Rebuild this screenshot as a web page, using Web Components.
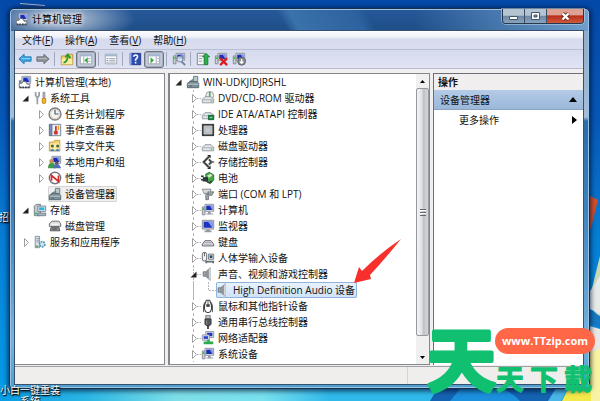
<!DOCTYPE html>
<html lang="zh-CN">
<head>
<meta charset="utf-8">
<title>计算机管理</title>
<style>
  body {
    margin: 0;
    font: 10px/16px "Open Sans", "Noto Sans CJK SC", sans-serif;
    color: #111;
    overflow: hidden;
  }
</style>
</head>
<body>

<template id="desktop-surface-template">
  <style>
    :host {
      display: grid;
      position: relative;
      box-sizing: border-box;
      height: 100vh;
      padding: 8px 10px 12px 9px;
      overflow: hidden;
    }
    .wallpaper {
      position: absolute;
      inset: 0;
      width: 100%;
      height: 100%;
    }
    ::slotted(*) { position: relative; }
  </style>
  <svg class="wallpaper" viewBox="0 0 600 401" preserveAspectRatio="none" aria-hidden="true">
    <defs>
      <linearGradient id="sky" x2="0" y2="1">
        <stop offset="0" stop-color="#0449a8"/><stop offset=".3" stop-color="#0558b8"/>
        <stop offset=".6" stop-color="#067fd6"/><stop offset="1" stop-color="#079de8"/>
      </linearGradient>
      <linearGradient id="floor">
        <stop offset="0" stop-color="#0a9ce4"/><stop offset=".2" stop-color="#2bb6e4"/>
        <stop offset=".4" stop-color="#7ddfe8"/><stop offset=".6" stop-color="#78e0ee"/>
        <stop offset=".75" stop-color="#2fb9ea"/>
      </linearGradient>
    </defs>
    <path fill="url(#sky)" d="M0 0h600v401H0z"/>
    <path fill="url(#floor)" d="M0 384h440v17H0z"/>
    <path fill="#12418c" d="M20 3l25 2v8H21z"/>
    <path fill="none" stroke="#9fb8da" d="M20 3.500l25 2"/>
    <path fill="#d4502c" d="M582 192l16 8-7 28-9 10z"/>
    <path fill="#c9d9b8" d="M600 256l-12 48 12 14z"/>
    <path fill="#e7ebe8" d="M588 294l12-18v38l-12-6z"/>
    <path fill="#167ac4" d="M586 308l14 8v12l-14-7z"/>
    <path fill="#e9e8e4" d="M586 325l14 4v22l-14 8z"/>
    <path fill="#f3e94a" d="M562 401l22-44 16-8v52z"/>
    <path fill="#f8f3a2" d="M590 352l10-3v52h-9z"/>
    <path fill="#1463b2" d="M430 401l10-17h127l-12 17z"/>
    <path fill="#1b90dc" d="M460 389q40-10 60 12h-70z"/>
    <path fill="#49b5e8" d="M556 388h12l-7 13h-13z"/>
  </svg>
  <slot></slot>
</template>

<template id="desktop-label-template">
  <style>
    :host {
      position: absolute !important;
      text-align: center;
      line-height: 11px;
      color: #fff;
      text-shadow: 0 1px 2px #000, 1px 1px 1px #000;
    }
    :host([place="side"]) { left: -1px; top: 212px; }
    :host([place="corner"]) { left: 0; top: 385px; width: 60px; }
  </style>
  <slot></slot>
</template>

<template id="app-window-template">
  <style>
    :host {
      display: flex;
      flex-direction: column;
      min-height: 0;
      padding: 0 5px 3px 4px;
      border: 1px solid #16304f;
      border-radius: 5px 5px 4px 4px;
      background:
        radial-gradient(ellipse 75px 24px at 50px 10px, #a9bad0 20%, transparent 100%),
        linear-gradient(90deg, transparent 70%, #6f9fcc) top / 100% 22px no-repeat,
        linear-gradient(60deg, transparent 47%, #3a72ab 49%, #2c629f 60%, transparent 62%) top / 100% 22px no-repeat,
        linear-gradient(#27589a, #1d4f88) top / 100% 22px no-repeat,
        linear-gradient(#8eaccb 20px, #a6bed6 108px, #2b6cab 112px, #3e82bd 200px, #75b4e0 330px, #4c9fd0);
      box-shadow: inset 0 0 0 1px #9fc2e0, 0 1px 5px 1px rgba(0, 10, 40, .7);
    }
    header {
      display: flex;
      align-items: center;
      gap: 3px;
      box-sizing: border-box;
      height: 21px;
      padding: 0 0 2px 1px;
    }
    h1 {
      flex: 1;
      margin: 0;
      font-size: 10px;
      font-weight: 400;
      color: #000;
      text-shadow: 0 0 5px #fff, 0 0 5px #dde6f0;
    }
    .controls {
      display: flex;
      align-self: start;
      height: 14px;
      border: 1px solid #26384e;
      border-top: 0;
      border-radius: 0 0 4px 4px;
      overflow: hidden;
      box-shadow: 0 0 0 1px rgba(200, 220, 240, .5);
    }
    .controls button {
      display: grid;
      place-items: center;
      width: 22px;
      padding: 0;
      border: 0;
      border-right: 1px solid #3a4e66;
      background: linear-gradient(#b5c4d3 0 45%, #6d87a3 50%, #8ba4bd);
    }
    .controls .close {
      width: 36px;
      border: 0;
      background: linear-gradient(#dea294 0 40%, #b92f1c 50%, #cf5a3c);
    }
    .controls svg { width: 13px; height: 11px; }
    .client {
      display: flex;
      flex: 1;
      flex-direction: column;
      min-height: 0;
      border: 1px solid #36506e;
      background: #f0eeee;
    }
  </style>
  <header>
    <mmc-icon name="manage"></mmc-icon>
    <h1></h1>
    <div class="controls">
      <button aria-label="最小化"><svg viewBox="0 0 13 11"><path fill="#fff" stroke="#43566c" d="M2.500 5.500h8v3h-8z"/></svg></button>
      <button aria-label="最大化"><svg viewBox="0 0 13 11"><path fill="#fff" stroke="#43566c" fill-rule="evenodd" d="M2.500 1.500h8v7h-8zM5 4h3v2H5z"/></svg></button>
      <button class="close" aria-label="关闭"><svg viewBox="0 0 13 11"><path stroke="#6b2a22" stroke-width="4" d="M3.500 2.500l6 6M9.500 2.500l-6 6"/><path stroke="#fff" stroke-width="2.400" d="M3.500 2.500l6 6M9.500 2.500l-6 6"/></svg></button>
    </div>
  </header>
  <div class="client"><slot></slot></div>
</template>

<template id="menu-bar-template">
  <style>
    :host {
      display: flex;
      height: 18px;
      flex: none;
      padding-left: 1px;
      border-bottom: 1px solid #b9bfd2;
      background: linear-gradient(#fdfdff, #eef0f9 35%, #d6dbed 45%, #d9ddef);
    }
    ::slotted(button) {
      padding: 0 6px;
      border: 0;
      background: none;
      color: inherit;
      font: inherit;
    }
  </style>
  <slot></slot>
</template>

<template id="tool-bar-template">
  <style>
    :host {
      display: flex;
      flex: none;
      align-items: center;
      height: 18px;
      margin-bottom: 5px;
      padding-left: 1px;
      background: linear-gradient(#d5daed, #dfe3f4);
      box-shadow: 0 1px #b8bccb;
    }
    button {
      display: grid;
      place-items: center;
      box-sizing: border-box;
      width: 18px;
      height: 16px;
      padding: 0;
      border: 0;
      background: none;
    }
    button[aria-pressed] {
      width: 20px;
      height: 17px;
      border: 1px solid #6d7382;
      border-radius: 3px;
      background: #c5cad9;
      box-shadow: inset 0 0 0 1px #a6adbc;
    }
    hr {
      width: 1px;
      height: 14px;
      margin: 0 3px 0 2px;
      border: 0;
      background: #a4a9ba;
    }
  </style>
</template>

<template id="pane-group-template">
  <style>
    :host {
      display: grid;
      grid-template: minmax(0, 1fr) / 150fr 262fr 150fr;
      gap: 3px;
      flex: 1;
      min-height: 0;
    }
  </style>
  <slot></slot>
</template>

<template id="tree-pane-template">
  <style>
    :host {
      display: flex;
      min-width: 0;
      border: 1px solid #84868c;
      border-left: 0;
      background: #fff;
      overflow: hidden;
    }
    :host([scroll]) { border-left: 2px solid #84868c; }
    .rows { flex: 1; min-width: 0; padding-left: 3px; }
    :host([scroll]) .rows { padding-left: 1px; }
    .scrollbar { display: none; }
    :host([scroll]) .scrollbar {
      display: flex;
      flex-direction: column;
      width: 13px;
      background: #f0f0f0;
    }
    .scrollbar button {
      height: 14px;
      padding: 0;
      border: 0;
      background: none;
    }
    .scrollbar svg { display: block; width: 5px; height: 3px; margin: auto; }
    .thumb {
      display: grid;
      place-items: center;
      flex: 1;
      margin-bottom: 14px;
      border: 1px solid #9698a0;
      border-radius: 2px;
      background: linear-gradient(90deg, #f4f4f5, #e3e3e6 40%, #c2c3c9 60%, #d4d5da);
    }
    .thumb i {
      width: 6px;
      height: 7px;
      background: repeating-linear-gradient(#666 0 1px, #fff 1px 2px, transparent 2px 3px);
    }
  </style>
  <div class="rows" role="tree"><slot></slot></div>
  <div class="scrollbar">
    <button aria-label="向上滚动"><svg viewBox="0 0 7 4"><path d="M0 4l3.500-4L7 4z"/></svg></button>
    <div class="thumb"><i></i></div>
    <button aria-label="向下滚动"><svg viewBox="0 0 7 4"><path d="M0 0l3.500 4L7 0z"/></svg></button>
  </div>
</template>

<template id="tree-row-template">
  <style>
    :host {
      display: flex;
      height: 16px;
      white-space: nowrap;
    }
    .cell {
      position: relative;
      flex: none;
      width: 15px;
      height: 16px;
    }
    .cell svg { position: absolute; inset: 0; width: 15px; height: 16px; }
    .body {
      position: relative;
      display: flex;
      align-items: center;
      gap: 3px;
      padding-right: 2px;
      border-radius: 2px;
    }
    :host([selected="dim"]) .body { background: #efefef; box-shadow: inset 0 0 0 1px #d4d4d4; }
    :host([selected="on"]) .body {
      background: linear-gradient(#eaf3fd, #cde1f8);
      box-shadow: inset 0 0 0 1px #8fb3dc;
    }
    ::slotted(pointer-arrow) { left: calc(100% - 4px); bottom: 14px; }
  </style>
  <div class="body"><mmc-icon></mmc-icon><span><slot></slot></span><slot name="note"></slot></div>
</template>

<template id="pointer-arrow-template">
  <style>
    :host { position: absolute; width: 48px; height: 46px; }
    svg { display: block; }
  </style>
  <svg width="48" height="46" viewBox="0 0 48 46" aria-hidden="true">
    <path fill="#f8302c" d="M1 45l5-16 3 4q18-18 39-32-16 20-31 36l1 4z"/>
  </svg>
</template>

<template id="action-pane-template">
  <style>
    :host {
      min-width: 0;
      box-sizing: border-box;
      border-top: 1px solid #6d6f76;
      border-left: 1px solid #6d6f76;
      background: #fff;
    }
    h2, h3 { margin: 0; font-size: 10px; }
    h2 { padding-left: 4px; background: #f0eeee; }
    h3, button {
      display: flex;
      align-items: center;
      justify-content: space-between;
      box-sizing: border-box;
      width: 100%;
      padding: 0 6px;
      height: 20px;
      font: inherit;
      color: inherit;
    }
    h3 {
      border-bottom: 1px solid #8ba3c2;
      background: linear-gradient(#b4cbe6, #9bb7d9);
    }
    button { padding-left: 25px; border: 0; background: none; }
  </style>
  <h2>操作</h2>
  <h3>设备管理器<svg width="8" height="5" viewBox="0 0 8 5"><path d="M0 5l4-5 4 5z"/></svg></h3>
  <button>更多操作<svg width="5" height="8" viewBox="0 0 5 8"><path d="M0 0l5 4-5 4z"/></svg></button>
</template>

<template id="status-bar-template">
  <style>
    :host {
      display: grid;
      grid-template-columns: 393fr 175fr;
      flex: none;
      height: 17px;
      margin-top: 1px;
      border-top: 1px solid #9fa1a6;
      background: #f0eded;
    }
    i { border-right: 1px solid #d5d3d3; }
  </style>
  <i></i>
</template>

<template id="site-mark-template">
  <style>
    :host {
      position: absolute !important;
      right: 5px;
      bottom: 3px;
      width: 167px;
      height: 74px;
    }
    svg { position: absolute; inset: 0; overflow: visible; }
    text {
      font-family: "Noto Sans CJK TC", sans-serif;
      font-weight: 700;
      fill: #10c070;
      stroke: #10c070;
      stroke-linejoin: round;
    }
    a {
      position: absolute;
      right: 0;
      top: 4px;
      width: 100px;
      border-radius: 13px;
      background: #ff6747;
      color: #fff;
      font: 700 11px/26px "Open Sans", sans-serif;
      text-align: center;
      text-decoration: none;
    }
  </style>
  <svg width="167" height="74" viewBox="0 0 167 74">
    <text x="-1" y="62" font-size="69" stroke-width="4">天</text>
    <text y="66" font-size="28" stroke-width="1"><tspan x="68">天</tspan><tspan x="102">下</tspan><tspan x="136">載</tspan></text>
  </svg>
  <a href="#">www.TTzip.com</a>
</template>

<desktop-surface>
  <desktop-label place="side">招</desktop-label>
  <app-window label="计算机管理">
    <menu-bar>
      <button>文件(<u>F</u>)</button>
      <button>操作(<u>A</u>)</button>
      <button>查看(<u>V</u>)</button>
      <button>帮助(<u>H</u>)</button>
    </menu-bar>
    <tool-bar></tool-bar>
    <pane-group>
      <tree-pane>
        <tree-row level="0" icon="manage">计算机管理(本地)</tree-row>
        <tree-row level="1" icon="tools" state="open">系统工具</tree-row>
        <tree-row level="2" icon="clock" state="closed">任务计划程序</tree-row>
        <tree-row level="2" icon="event" state="closed">事件查看器</tree-row>
        <tree-row level="2" icon="share" state="closed">共享文件夹</tree-row>
        <tree-row level="2" icon="users" state="closed">本地用户和组</tree-row>
        <tree-row level="2" icon="perf" state="closed">性能</tree-row>
        <tree-row level="2" icon="device" selected="dim">设备管理器</tree-row>
        <tree-row level="1" icon="storage" state="open">存储</tree-row>
        <tree-row level="2" icon="disk">磁盘管理</tree-row>
        <tree-row level="1" icon="services" state="closed">服务和应用程序</tree-row>
      </tree-pane>
      <tree-pane scroll>
        <tree-row level="1" icon="device" state="open">WIN-UDKJIDJRSHL</tree-row>
        <tree-row level="2" icon="dvd" state="closed" lines>DVD/CD-ROM 驱动器</tree-row>
        <tree-row level="2" icon="ide" state="closed" lines>IDE ATA/ATAPI 控制器</tree-row>
        <tree-row level="2" icon="cpu" state="closed" lines>处理器</tree-row>
        <tree-row level="2" icon="drive" state="closed" lines>磁盘驱动器</tree-row>
        <tree-row level="2" icon="scsi" state="closed" lines>存储控制器</tree-row>
        <tree-row level="2" icon="battery" state="closed" lines>电池</tree-row>
        <tree-row level="2" icon="port" state="closed" lines>端口 (COM 和 LPT)</tree-row>
        <tree-row level="2" icon="computer" state="closed" lines>计算机</tree-row>
        <tree-row level="2" icon="monitor" state="closed" lines>监视器</tree-row>
        <tree-row level="2" icon="keyboard" state="closed" lines>键盘</tree-row>
        <tree-row level="2" icon="hid" state="closed" lines>人体学输入设备</tree-row>
        <tree-row level="2" icon="sound" state="open" lines>声音、视频和游戏控制器</tree-row>
        <tree-row level="3" icon="sound" selected="on" lines>High Definition Audio 设备<pointer-arrow slot="note"></pointer-arrow></tree-row>
        <tree-row level="2" icon="mouse" state="closed" lines>鼠标和其他指针设备</tree-row>
        <tree-row level="2" icon="usb" state="closed" lines>通用串行总线控制器</tree-row>
        <tree-row level="2" icon="network" state="closed" lines>网络适配器</tree-row>
        <tree-row level="2" icon="computer" state="closed" lines>系统设备</tree-row>
      </tree-pane>
      <action-pane></action-pane>
    </pane-group>
    <status-bar></status-bar>
  </app-window>
  <desktop-label place="corner">小白一键重装<br>系统</desktop-label>
  <site-mark></site-mark>
</desktop-surface>

<script>
  const screen16 = '<path fill="#d9dce4" stroke="#8a8f9c" d="M4.500 1.500h10v8h-10z"/><path fill="#1c2fb4" d="M6 3h7v5H6z"/><path fill="#7f9cf0" d="M10 3h3v5z"/>';
  const sheet = '<path fill="#fbfcfe" stroke="#9aa0ac" d="M1.500 2.500h13v11h-13z"/><path fill="#9db6d6" d="M2 3h12v2H2z"/>';
  const drive = '<path fill="#e3e5e8" stroke="#8d9299" d="M1.500 9.500l3-3h7l3 3v4h-13z"/><path stroke="#a4a8ae" d="M2 10h12"/><path fill="#38b24a" d="M11 11h2v1h-2z"/>';
  const tower = '<path fill="#cdd2d9" stroke="#7e858f" d="M1.500 4.500h3v9h-3z"/><path fill="#3eb84a" d="M2 6h2v2H2z"/>';

  const icons = {
    manage: screen16 + '<path fill="#fff" stroke="#5d6672" d="M1.500 9.500h3l1-2h3l2 3h3v4h-12z"/><path stroke="#39424e" stroke-dasharray="2 1" stroke-width="2" d="M2 14h12"/><path fill="#7d8794" d="M1 6h3v4H1z"/>',
    tools: '<path fill="none" stroke="#9aa0a8" stroke-width="2" d="M3 1v4q2 2 2 4v6M7 1v4L5 8"/><path fill="#c7cbd2" stroke="#7e858e" d="M11.500 1.500h2v6h-2z"/><path fill="#f5b52c" stroke="#b97e12" d="M10.500 8.500h4v5l-2 1-2-1z"/>',
    clock: '<circle cx="8" cy="8" r="6.800" fill="#f8f5ea" stroke="#7a7d82" stroke-width="1.600"/><circle cx="8" cy="8" r="5" fill="none" stroke="#d9cfae"/><path fill="none" stroke="#3a5f96" stroke-width="1.400" d="M8 3v5h4"/>',
    event: '<path fill="#7d90b8" stroke="#55637f" d="M1.500 1.500h3v13h-3z"/><path fill="#e9eef7" stroke="#6a7895" d="M4.500 1.500h10v13h-10z"/><path stroke="#d3372c" stroke-width="2" stroke-linecap="round" d="M9 4v5"/><circle cx="9" cy="11" r="2.400" fill="#d3372c"/><path stroke="#e9a11f" stroke-width="1.500" d="M12 3v5"/>',
    share: '<path fill="#f3d377" stroke="#c39a38" d="M1.500 3.500h5l1-2h6v12h-12z"/><path fill="#fbeaaa" d="M3 5h10v8H3z"/><circle cx="5" cy="8" r="1.800" fill="#4f6a36"/><circle cx="11" cy="8" r="1.800" fill="#4f6a36"/><path fill="#4b82b8" d="M2 14q3-6 6 0zM8 14q3-6 6 0z"/>',
    users: screen16 + '<circle cx="4" cy="7" r="2.500" fill="#c99053"/><path fill="#3f9a4b" d="M0 15q0-6 4-6t5 6z"/><circle cx="10" cy="9" r="2" fill="#70513a"/><path fill="#506fb4" d="M6 15q1-5 4-5t5 5z"/>',
    perf: '<circle cx="8" cy="8" r="6.500" fill="#fff" stroke="#73777d" stroke-width="1.600"/><path fill="none" stroke="#d42c25" stroke-width="2" d="M4 11V5l8 7V5"/>',
    device: '<path fill="#b7c8ca" stroke="#65777b" d="M8.500 1.500h5v6h-5z"/><path fill="none" stroke="#78868d" stroke-width="2" d="M4 8l5-3"/><path fill="#7e919a" stroke="#52636c" d="M1.500 9.500l3-2h8l2 2v5h-13z"/><path fill="#c3d0d6" d="M2 10h12v1H2z"/><path fill="#4a5a63" d="M4 12h3v1H4z"/>',
    storage: '<path fill="#c4c9d0" stroke="#717b86" d="M1.500 3.500l2-2h5v13h-7z"/><path fill="#dfe9f2" stroke="#6f7c8a" d="M5.500 3.500h9v6h-9z"/><path fill="#2cb4da" d="M7 5h6v3H7z"/><path fill="#aab6c2" stroke="#6f7c8a" d="M5.500 11.500h9v3h-9z"/><path fill="#41b658" d="M2 11h3v2H2z"/>',
    disk: '<path fill="#dcdedf" stroke="#5f6366" d="M1.500 5.500l3-3h8l2 3v3h-13z"/><path fill="#898e92" stroke="#505457" d="M3.500 9.500h9l1 4h-11z"/><path stroke="#fff" d="M4 6h8"/><path fill="#3f4346" d="M5 11h5v1H5z"/>',
    services: '<path fill="#dbe3ec" stroke="#7e8c9b" d="M2.500 1.500h5v13h-5z"/><path stroke="#8797a8" d="M4 4h3M4 6h3M4 8h3"/><circle cx="10.500" cy="10.500" r="3" fill="#d3e7f0" stroke="#5394b4" stroke-width="2" stroke-dasharray="2 1"/><path fill="#54a562" d="M3 12h3v2H3z"/>',
    dvd: '<circle cx="10" cy="5" r="4.500" fill="#eceeef" stroke="#8f9498"/><path stroke="#55a96a" stroke-width="2" d="M10 1v8"/>' + drive,
    ide: drive + '<path fill="#1c8c45" stroke="#0c6430" d="M8.500 9.500h6v5h-6z"/><path stroke="#a4e0b4" d="M10 12h3"/>',
    cpu: '<path fill="#3d3e40" d="M1 1h14v14H1z"/><path fill="#a9adb1" stroke="#dcdee0" d="M3.500 3.500h9v9h-9z"/><path fill="#c6cacd" d="M5 5h6v6H5z"/>',
    drive,
    scsi: '<path fill="none" stroke="#414346" stroke-width="2.400" d="M9 2L3 8l6 6M9 5l3 3-3 3"/><path fill="#26282a" d="M7 0h4v4zM7 16h4v-4z"/><path stroke="#76797c" stroke-width="2" d="M12 8h3"/>',
    battery: '<path fill="#46a84b" stroke="#27702e" d="M5.500 3.500l4-2 5 3v6l-4 4-5-3z"/><path fill="#d4e9bd" d="M7 5l4-2 2 2-4 3z"/><path fill="#2f3538" d="M2 7h6v5H2z"/><path fill="none" stroke="#33393b" stroke-width="1.500" d="M0 6h3M0 10h3M7 12q3 3 5-1"/>',
    port: '<path fill="#cfd3d7" stroke="#7d858c" d="M1.500 2.500h10l-2 5h-6z"/><path fill="#9fa6ac" stroke="#6d757c" d="M7.500 5.500h7l-2 4h-3zM5.500 8.500h3v6h-3z"/><path stroke="#fff" stroke-dasharray="1 1" d="M3 4.500h7"/>',
    computer: screen16 + tower + '<path fill="#9499a3" d="M8 10h3v2H8zM6 12h8v1H6z"/>',
    monitor: '<path fill="#d5d8df" stroke="#7e838e" d="M1.500 1.500h13v10h-13z"/><path fill="#1c32c0" d="M3 3h10v7H3z"/><path fill="#87a0f2" d="M8 3h5v7z"/><path fill="#9297a0" d="M6 12h4v1H6zM4 13h8v2H4z"/>',
    keyboard: '<path fill="#e3e5e8" stroke="#55595e" stroke-linejoin="round" d="M1.500 10.500l3-4h7l3 4v2h-13z"/><path stroke="#a0a4aa" d="M4 8.500h8M3 10.500h10"/>',
    hid: '<rect x="1.500" y="1.500" width="5" height="10" rx="2.500" fill="#f4f4f5" stroke="#54585d"/><path stroke="#54585d" d="M4 2v4"/><path fill="#d6dade" stroke="#71777e" d="M8.500 3.500h6v6h-6z"/><path fill="#2c4d68" d="M10 5h3v3h-3z"/><path fill="none" stroke="#656b72" stroke-width="2" d="M6 14v-2h8v2"/>',
    sound: '<path fill="#a9adb1" stroke="#686d72" d="M2.500 5.500h3v5h-3z"/><path fill="#8f9498" d="M5 5l6-5v16l-6-5z"/><path fill="#d4d7d9" d="M9 3l2-3v16l-2-3z"/>',
    mouse: '<path fill="#fff" stroke="#3f4347" stroke-width="1.200" d="M6 1.500h4l2 6v4q-1 4-4 4t-4-4v-4z"/><path stroke="#3f4347" d="M8 2v5M3 15V8l1-4M13 15V8l-1-4"/><path fill="#3f4347" d="M6 6h4v3H6z"/>',
    usb: '<path fill="#c0c4c8" stroke="#6d7175" d="M5.500.500h5v4h-5z"/><path fill="#54585c" stroke="#37393c" stroke-linejoin="round" d="M4.500 4.500h7v6l-2 2h-3l-2-2z"/><path fill="#8c9094" d="M6 6h1v5H6z"/><path stroke="#37393c" stroke-width="2" d="M8 12v4"/>',
    network: '<path fill="#dde1ea" stroke="#8b93a5" d="M5.500.500h9v7h-9z"/><path fill="#2033bc" d="M7 2h6v4H7z"/><path fill="#dde1ea" stroke="#8b93a5" d="M1.500 4.500h8v6h-8z"/><path fill="#2841d2" d="M3 6h5v3H3z"/><path fill="#2cab51" d="M7 10h3v2h4v3H3v-3h4z"/>',
    back: '<path fill="#3ba5e4" stroke="#2478b6" stroke-linejoin="round" d="M1 8l6-5.500v3h8v5H7v3z"/><path stroke="#9bdcf9" d="M4 7.500h10"/>',
    forward: '<path fill="#8f9399" stroke="#6b6f76" stroke-linejoin="round" d="M15 8L9 2.500v3H1v5h8v3z"/><path stroke="#c0c3c8" d="M2 7.500h10"/>',
    up: '<path fill="#f4d668" stroke="#b8952f" d="M1.500 4.500h5l1-2h7v12h-13z"/><path fill="#fbeaa0" d="M2 8h12v6H2z"/><path fill="none" stroke="#29973a" stroke-width="2" d="M4 12q4 0 5-7M6 6l3-3 3 4"/>',
    tree: sheet + '<path stroke="#9aa0ac" d="M5.500 5v8M10 7.500h3M10 10.500h3"/><path fill="#36a844" d="M10 6v7l-4-3.500z"/>',
    panel: sheet + '<path stroke="#9aa0ac" d="M10.500 5v8M12 7.500h2M12 10.500h2"/><path fill="#36a844" d="M4 6v7l4-3.500z"/>',
    props: sheet + '<path stroke="#929aa8" d="M6 7.500h7M6 9.500h7M6 11.500h7"/><path stroke="#4f73a8" stroke-dasharray="1 1" stroke-width="2" d="M4 7v6"/>',
    help: '<path fill="#2d4cb0" stroke="#1e337d" d="M2.500 1.500h12v13h-12z"/><path fill="#96abdf" d="M2 1h2v14H2z"/><path fill="none" stroke="#fff" stroke-width="1.800" d="M6.500 5.500q0-2 2.200-2t2.200 2q0 1.500-2.200 3v1.500M8.700 11v2"/>',
    scan: screen16 + tower + '<circle cx="9" cy="8" r="3.500" fill="#dcebf6" fill-opacity=".8" stroke="#6d7f91"/><path stroke="#6d7f91" stroke-width="2" d="M11 11l4 4"/>',
    update: '<path fill="#f6f7f8" stroke="#747a80" d="M1.500 1.500h8v13h-8z"/><path stroke="#89939d" d="M3 4.500h5M3 7.500h4M3 10.500h4"/><path fill="#2fb24b" stroke="#157c2d" d="M11.500 1.500l4 4h-2v9h-4v-9h-2z"/>',
    remove: screen16 + tower + '<path stroke="#d91f1f" stroke-width="2.600" d="M7 7l8 8M15 7l-8 8"/>',
    disable: screen16 + tower + '<circle cx="11" cy="10.500" r="4.500" fill="#8a8e93" stroke="#595d62"/><path fill="none" stroke="#fff" stroke-width="1.500" d="M11 8v5M9 11l2 2 2-2"/>'
  };

  function addTemplateToShadow (element) {
    const shadow = element.attachShadow({ mode: 'open' });
    const template = document.querySelector(`#${element.localName}-template`);
    shadow.appendChild(template.content.cloneNode(true));
    return shadow;
  }

  class TemplateElement extends HTMLElement {
    constructor () {
      super();
      addTemplateToShadow(this);
    }
  }

  class MmcIcon extends HTMLElement {
    static get observedAttributes () { return ['name']; }

    constructor () {
      super();
      this.attachShadow({ mode: 'open' });
    }

    attributeChangedCallback () {
      this.shadowRoot.innerHTML = `
        <style>:host { display: block; flex: none; width: 14px; height: 14px; } svg { display: block; }</style>
        <svg width="14" height="14" viewBox="0 0 16 16" aria-hidden="true">${icons[this.getAttribute('name')] || ''}</svg>`;
    }
  }

  class AppWindow extends TemplateElement {
    connectedCallback () {
      this.shadowRoot.querySelector('h1').textContent = this.getAttribute('label');
    }
  }

  class ToolBar extends TemplateElement {
    connectedCallback () {
      const tools = [
        ['back', '后退'], ['forward', '前进'], null,
        ['up', '上一级'], ['tree', '显示控制台树', true], null,
        ['props', '属性'], null,
        ['help', '帮助'], ['panel', '显示操作窗格', true], null,
        ['scan', '扫描检测硬件改动'], null,
        ['update', '更新驱动程序'], ['remove', '卸载'], ['disable', '禁用']
      ];
      this.shadowRoot.innerHTML += tools.map(tool => tool
        ? `<button aria-label="${tool[1]}" ${tool[2] ? 'aria-pressed="true"' : ''}><mmc-icon name="${tool[0]}"></mmc-icon></button>`
        : '<hr>').join('');
    }
  }

  class TreeRow extends TemplateElement {
    connectedCallback () {
      const level = Number(this.getAttribute('level'));
      const body = this.shadowRoot.querySelector('.body');
      this.setAttribute('role', 'treeitem');
      body.querySelector('mmc-icon').setAttribute('name', this.getAttribute('icon'));
      for (let i = 1; i <= level; i++) {
        const cell = document.createElement('div');
        cell.className = 'cell';
        cell.innerHTML = `<svg viewBox="0 0 15 16" aria-hidden="true">${this._cellContent(i, level)}</svg>`;
        body.before(cell);
      }
    }

    _cellContent (i, level) {
      let content = '';
      if (this.hasAttribute('lines') && i > 1) {
        // the last level turns towards its icon, the ones before run through
        const path = i < level ? 'M7.500 0v16' : i === 3 ? 'M7.500 0v8.500H15' : 'M7.500 0v16M7.500 8.500H15';
        content += `<path fill="none" stroke="#b4b4b4" stroke-dasharray="${i < level ? 'none' : '2 1'}" d="${path}"/>`;
      }
      if (i === level && this.getAttribute('state') === 'open') {
        content += '<path fill="#222" stroke="#fff" paint-order="stroke" d="M10.500 5.500v6h-6z"/>';
      }
      if (i === level && this.getAttribute('state') === 'closed') {
        content += '<path fill="none" stroke="#fff" stroke-width="6" d="M8 3v11"/><path fill="#fff" stroke="#a0a0a0" d="M6.500 4.500l4 4-4 4z"/>';
      }
      return content;
    }
  }

  customElements.define('mmc-icon', MmcIcon);
  customElements.define('desktop-surface', class extends TemplateElement {});
  customElements.define('desktop-label', class extends TemplateElement {});
  customElements.define('app-window', AppWindow);
  customElements.define('menu-bar', class extends TemplateElement {});
  customElements.define('tool-bar', ToolBar);
  customElements.define('pane-group', class extends TemplateElement {});
  customElements.define('tree-pane', class extends TemplateElement {});
  customElements.define('tree-row', TreeRow);
  customElements.define('pointer-arrow', class extends TemplateElement {});
  customElements.define('action-pane', class extends TemplateElement {});
  customElements.define('status-bar', class extends TemplateElement {});
  customElements.define('site-mark', class extends TemplateElement {});
</script>
</body>
</html>
